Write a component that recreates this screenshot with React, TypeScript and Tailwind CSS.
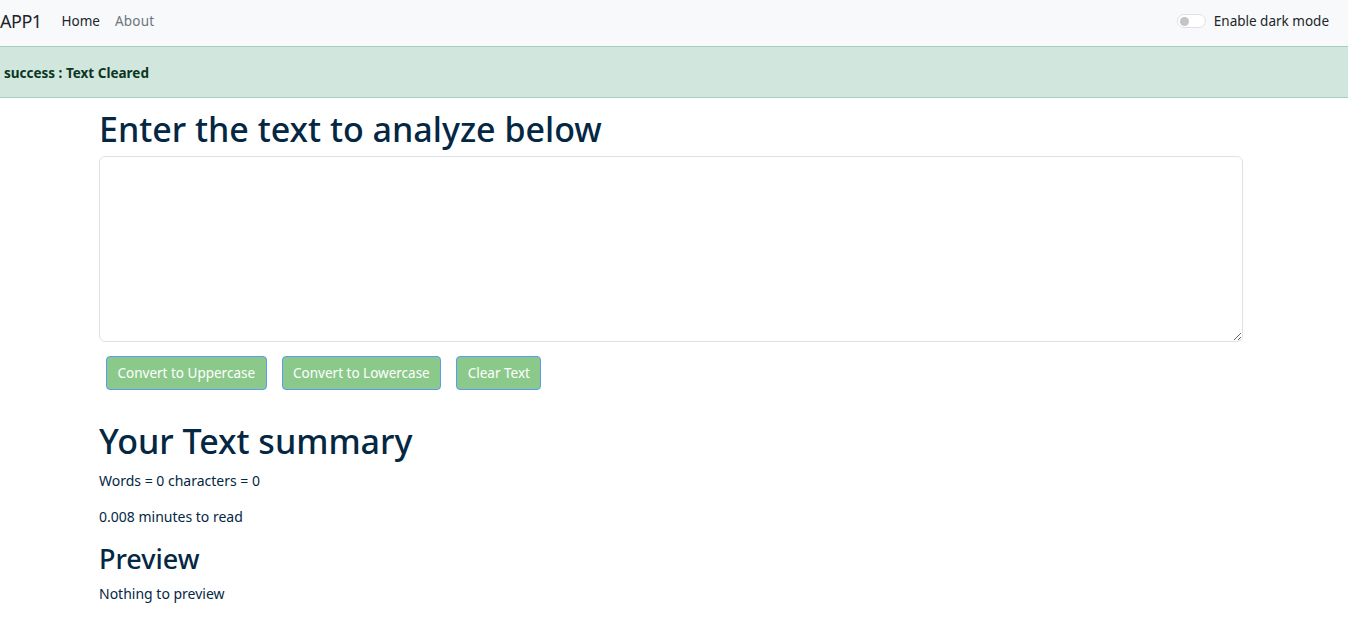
import { useState } from "react";

const font = { fontFamily: '"Noto Sans", "Open Sans", sans-serif' };

const btn =
  "h-[34px] px-[10.5px] text-[13.5px] text-white bg-[#8bc98b] border border-[#5b9cf2] rounded-[4px]";

export default function App() {
  const [text, setText] = useState("");

  return (
    <div className="min-h-screen bg-white text-[#042743]" style={font}>
      {/* Navbar */}
      <nav className="h-[46px] bg-[#f8f9fa] flex items-center justify-between pr-[19px] pb-[4px]">
        <div className="flex items-center">
          <span className="text-[18px] text-[#212529] leading-none tracking-[-0.5px]">APP1</span>
          <a className="ml-[20px] text-[13.5px] text-[#212529]">Home</a>
          <a className="ml-[15px] text-[13.5px] text-[#6c757d] tracking-[0.2px]">About</a>
        </div>
        <label className="flex items-center gap-[8px]">
          <span className="w-[29px] h-[14px] rounded-full border border-[#dee2e6] bg-white flex items-center px-[2px]">
            <span className="w-[9px] h-[9px] rounded-full bg-[#c4c4c4]" />
          </span>
          <span className="text-[13.5px] text-[#212529]">Enable dark mode</span>
        </label>
      </nav>

      {/* Alert */}
      <div className="h-[52px] bg-[#d1e7dd] border-y border-[#a3cfbb] flex items-center px-[4px] pt-[3px]">
        <span className="text-[13.5px] font-bold text-[#0a3622]">success : Text Cleared</span>
      </div>

      {/* Main */}
      <div className="ml-[99px] w-[1144px]">
        <h1 className="text-[34px] font-medium leading-[1.2] mt-[11px] mb-[6px]">Enter the text to analyze below</h1>
        <textarea
          value={text}
          onChange={(e) => setText(e.target.value)}
          className="block w-full h-[186px] border border-[#dee2e6] rounded-[6px] p-2 outline-none"
        />
        <div className="flex gap-[15px] mt-[14px] ml-[7px]">
          <button className={btn}>Convert to Uppercase</button>
          <button className={btn}>Convert to Lowercase</button>
          <button className={btn}>Clear Text</button>
        </div>

        <h2 className="text-[34px] font-medium leading-[1.2] mt-[31px]">Your Text summary</h2>
        <p className="text-[14px] mt-[8px]">Words = 0 characters = 0</p>
        <p className="text-[14px] mt-[15px]">0.008 minutes to read</p>
        <h2 className="text-[27px] font-medium leading-[1.2] mt-[16px]">Preview</h2>
        <p className="text-[14px] mt-[8px]">Nothing to preview</p>
      </div>
    </div>
  );
}
